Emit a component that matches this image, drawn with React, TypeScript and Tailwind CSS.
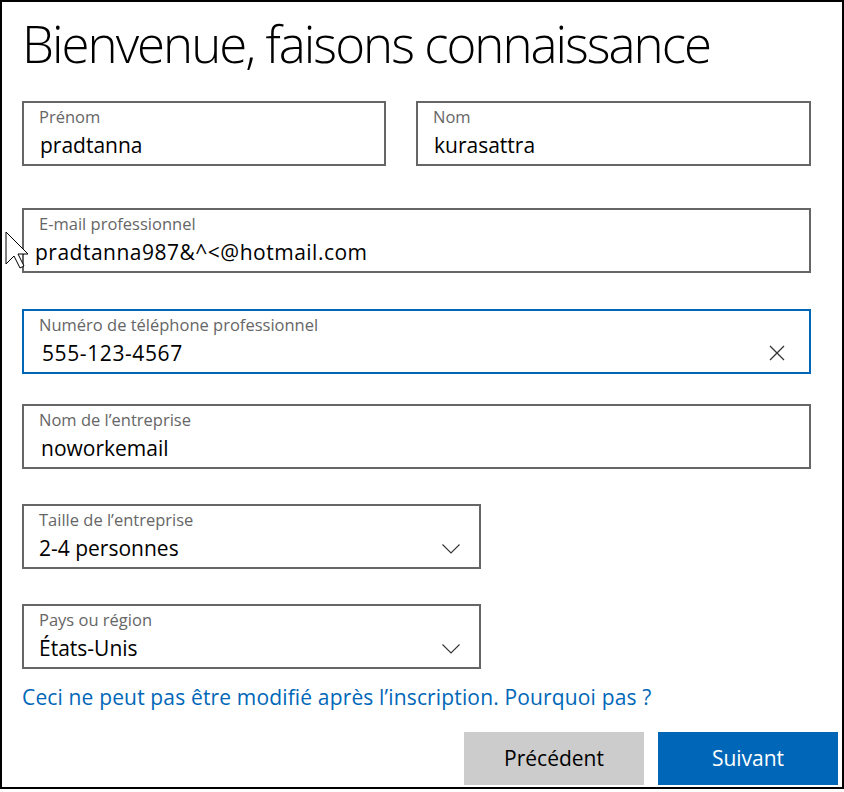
import React from 'react';

type FieldProps = {
  label: string;
  value: string;
  boxClass: string;
  valueClass?: string;
  trailing?: React.ReactNode;
};

const Field: React.FC<FieldProps> = ({ label, value, boxClass, valueClass = 'pl-[16px]', trailing }) => (
  <div className={`h-[65px] border-2 flex flex-col ${boxClass}`}>
    <div className="pl-[15px] pt-[4px] text-[16.5px] leading-[20px] text-[#666666]">{label}</div>
    <div className="flex items-center justify-between pt-[3px]">
      <span className={`text-[21px] leading-[30px] text-black ${valueClass}`}>{value}</span>
      {trailing}
    </div>
  </div>
);

const Chevron = () => (
  <svg width="18" height="10" viewBox="0 0 18 10" className="mr-[19px] mt-[2px]" fill="none">
    <path d="M0.5 0.5 L9 9 L17.5 0.5" stroke="#333333" strokeWidth="1.1" />
  </svg>
);

const ClearIcon = () => (
  <svg width="16" height="16" viewBox="0 0 16 16" className="mr-[24px]" fill="none">
    <path d="M1 1 L15 15 M15 1 L1 15" stroke="#333333" strokeWidth="1.3" />
  </svg>
);

const Cursor = () => (
  <svg width="24" height="38" viewBox="0 0 24 38" className="absolute left-[3px] top-[229px]">
    <path d="M1 1 L1 33 L9 25 L15 37 L19 35 L13 23 L23 23 Z" fill="white" stroke="black" strokeWidth="1" />
  </svg>
);

export default function App() {
  return (
    <div className="relative w-[844px] h-[789px] border-2 border-black bg-white pl-5 pr-1 font-['Open_Sans',sans-serif]">
      <div className="h-[99px] pt-[16px]">
        <h1 className="text-[51px] leading-none font-light tracking-[-2px] text-black">Bienvenue, faisons connaissance</h1>
      </div>

      <div className="pr-[27px]">
        <div className="flex gap-[30px]">
          <Field label="Prénom" value="pradtanna" boxClass="w-[364px] border-[#666666]" />
          <Field label="Nom" value="kurasattra" boxClass="w-[395px] border-[#666666]" />
        </div>

        <div className="mt-[42px]">
          <Field
            label="E-mail professionnel"
            value="pradtanna987&^<@hotmail.com"
            boxClass="w-full border-[#666666]"
            valueClass="pl-[11px] tracking-[0.5px]"
          />
        </div>

        <div className="mt-[36px]">
          <Field
            label="Numéro de téléphone professionnel"
            value="555-123-4567"
            boxClass="w-full border-[#0067b8]"
            valueClass="pl-[18px] tracking-[0.6px]"
            trailing={<ClearIcon />}
          />
        </div>

        <div className="mt-[30px]">
          <Field label="Nom de l’entreprise" value="noworkemail" boxClass="w-full border-[#666666]" valueClass="pl-[17px]" />
        </div>

        <div className="mt-[35px]">
          <Field
            label="Taille de l’entreprise"
            value="2-4 personnes"
            boxClass="w-[459px] border-[#666666]"
            valueClass="pl-[15px]"
            trailing={<Chevron />}
          />
        </div>

        <div className="mt-[35px]">
          <Field
            label="Pays ou région"
            value="États-Unis"
            boxClass="w-[459px] border-[#666666]"
            valueClass="pl-[15px]"
            trailing={<Chevron />}
          />
        </div>

        <p className="mt-[15px] text-[21px] leading-[26px] tracking-[0.15px] text-[#0067b8]">
          Ceci ne peut pas être modifié après l’inscription. Pourquoi pas ?
        </p>
      </div>

      <div className="mt-[22px] flex justify-end gap-[14px]">
        <button className="w-[180px] h-[53px] bg-[#cccccc] text-[21px] text-black">Précédent</button>
        <button className="w-[180px] h-[53px] bg-[#0067b8] text-[21px] text-white">Suivant</button>
      </div>

      <Cursor />
    </div>
  );
}
